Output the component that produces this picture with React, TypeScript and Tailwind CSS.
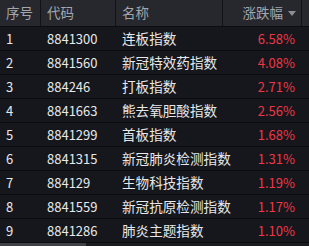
import React from "react";

interface Row {
  code: string;
  name: string;
  change: string;
}

const rows: Row[] = [
  { code: "8841300", name: "连板指数", change: "6.58%" },
  { code: "8841560", name: "新冠特效药指数", change: "4.08%" },
  { code: "884246", name: "打板指数", change: "2.71%" },
  { code: "8841663", name: "熊去氧胆酸指数", change: "2.56%" },
  { code: "8841299", name: "首板指数", change: "1.68%" },
  { code: "8841315", name: "新冠肺炎检测指数", change: "1.31%" },
  { code: "884129", name: "生物科技指数", change: "1.19%" },
  { code: "8841559", name: "新冠抗原检测指数", change: "1.17%" },
  { code: "8841286", name: "肺炎主题指数", change: "1.10%" },
];

const cols = "grid grid-cols-[41px_75px_107px_79px_7px]";

export default function App() {
  return (
    <div
      className="w-[309px] h-[246px] overflow-hidden bg-[#15171c] text-[13px] leading-none"
      style={{ fontFamily: '"Noto Sans CJK SC", "Noto Sans", sans-serif' }}
    >
      {/* Header */}
      <div className={`${cols} h-[26px] bg-[#27282d] text-[#a3a6ad] text-[13.5px]`}>
        <div className="flex items-center pl-[6px] border-r border-[#111215]">序号</div>
        <div className="flex items-center pl-[6px] border-r border-[#111215]">代码</div>
        <div className="flex items-center pl-[6px] border-r border-[#111215]">名称</div>
        <div className="flex items-center justify-end pr-[5px] gap-[5px] border-r border-[#111215]">
          <span>涨跌幅</span>
          <span className="w-0 h-0 border-l-[4px] border-r-[4px] border-t-[5px] border-l-transparent border-r-transparent border-t-[#8b8e94]" />
        </div>
        <div />
      </div>

      {/* Rows */}
      {rows.map((r, i) => (
        <div key={r.code} className={`${cols} h-[24px] border-t border-[#0b0c0f] text-[#e8e8ea]`}>
          <div className="flex items-center pl-[6px]">{i + 1}</div>
          <div className="flex items-center pl-[6px]">{r.code}</div>
          <div className="flex items-center pl-[6px] whitespace-nowrap text-[13.6px]">{r.name}</div>
          <div className="flex items-center justify-end pr-[7px] text-[#f23645]">{r.change}</div>
          <div />
        </div>
      ))}

      {/* Scrollbar */}
      <div className="flex h-[4px] border-t border-[#0b0c0f] bg-[#1b1c20]">
        <div className="w-[86px] bg-[#404146]" />
      </div>
    </div>
  );
}
